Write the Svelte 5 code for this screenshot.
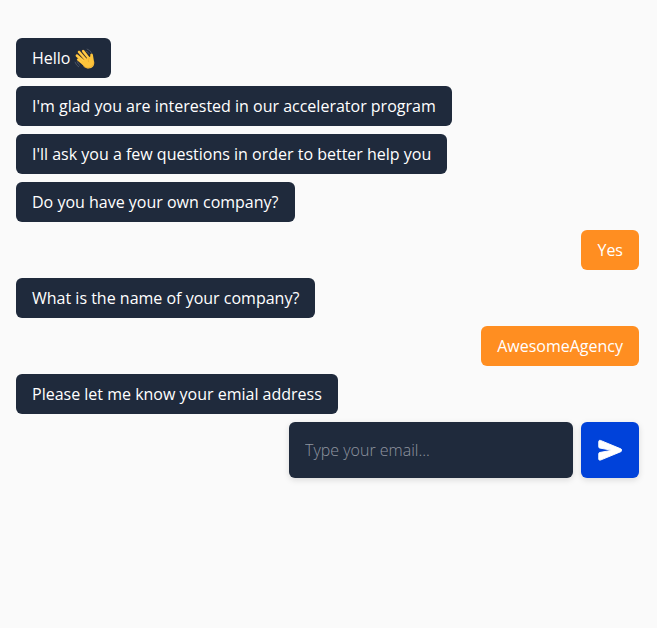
<script>
  const messages = [
    { text: 'Hello', wave: true },
    { text: "I'm glad you are interested in our accelerator program" },
    { text: "I'll ask you a few questions in order to better help you" },
    { text: 'Do you have your own company?' },
    { text: 'Yes', guest: true },
    { text: 'What is the name of your company?' },
    { text: 'AwesomeAgency', guest: true },
    { text: 'Please let me know your emial address' },
  ];
  let email = $state('');
</script>

<main>
  {#each messages as message}
    <div class="bubble" class:guest={message.guest}>
      <span>{message.text}</span>
      {#if message.wave}
        <svg class="wave" viewBox="0 0 40 40" role="img" aria-label="Waving hand">
          <g fill="none" stroke="#535c69" stroke-width="1.6" stroke-linecap="round">
            <path d="M2 27q2 6 7 9M6 26q2 5 5 7M25 2q6 2 8 7M23 6q4 1 6 5" />
          </g>
          <g fill="none" stroke-linecap="round" stroke-linejoin="round">
            <g stroke="#e39a26" stroke-width="5">
              <path d="M8 22l12 10M5.500 14.500L21 27M9.500 7.500l15 17M17.500 6l11 14" />
            </g>
            <g stroke="#ffcc48" stroke-width="3.800">
              <path d="M8 22l12 10M5.500 14.500L21 27M9.500 7.500l15 17M17.500 6l11 14" />
            </g>
          </g>
          <path fill="#fdc43b" d="M14 27L28 17q4 1 3-3c-.5-4 4-5 5-1l2 12c2 9-3 13-10 14-7 0-10-5-14-12z" />
          <path fill="none" stroke="#e9a62e" stroke-width="1.200" d="M30 18q-5 4-2 9M18 35c8 6 20 1 20-9" />
        </svg>
      {/if}
    </div>
  {/each}

  <form onsubmit={(event) => event.preventDefault()}>
    <input type="text" placeholder="Type your email..." aria-label="Email" bind:value={email} />
    <button type="submit" aria-label="Send">
      <svg viewBox="0 0 512 512" fill="currentColor">
        <path d="M476.59 227.05l-.16-.07L49.35 49.84A23.56 23.56 0 0027.14 52 24.65 24.65 0 0016 72.59v113.29a24 24 0 0019.52 23.57l232.93 43.07a4 4 0 010 7.86L35.53 303.45A24 24 0 0016 327v113.31A23.57 23.57 0 0026.59 460a23.94 23.94 0 0013.22 4 24.55 24.55 0 009.52-1.93L476.4 285.94l.19-.09a32 32 0 000-58.8z" />
      </svg>
    </button>
  </form>
</main>

<style>
  :global(body) {
    margin: 0;
    background: #fafafa;
  }
  main {
    box-sizing: border-box;
    min-height: 628px;
    padding: 38px 18px 0 16px;
    display: flex;
    flex-direction: column;
    align-items: flex-start;
    gap: 8px;
    font: 16px/24px 'Open Sans', sans-serif;
  }
  .bubble {
    display: flex;
    align-items: center;
    gap: 4px;
    height: 40px;
    box-sizing: border-box;
    padding: 0 16px;
    border-radius: 6px;
    background: #1f2a3c;
    color: #fff;
    white-space: nowrap;
  }
  .guest {
    align-self: flex-end;
    background: #ff8e21;
  }
  .wave {
    width: 21px;
    height: 21px;
  }
  form {
    align-self: flex-end;
    display: flex;
    gap: 8px;
  }
  input,
  button {
    box-sizing: border-box;
    height: 56px;
    margin: 0;
    border: 0;
    padding: 0 16px;
    border-radius: 6px;
    box-shadow: 0 2px 6px rgba(0, 0, 0, 0.13);
  }
  input {
    width: 284px;
    background: #1f2a3c;
    color: #fff;
    font: 300 16px/24px 'Open Sans', sans-serif;
    outline: 0;
  }
  input::placeholder {
    color: #9095a0;
    opacity: 1;
  }
  button {
    width: 58px;
    display: flex;
    align-items: center;
    justify-content: center;
    background: #0042da;
    color: #fff;
  }
  button svg {
    width: 24.5px;
    height: 24.5px;
    flex: none;
    stroke: currentColor;
    stroke-width: 20;
    stroke-linejoin: round;
  }
</style>
